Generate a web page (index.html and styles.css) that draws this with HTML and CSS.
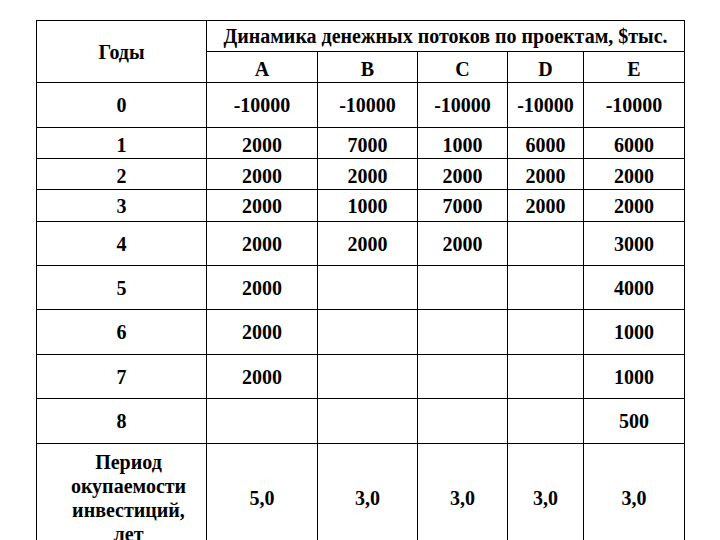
FILE: index.html
```html
<!DOCTYPE html>
<html lang="ru">
<head>
<meta charset="utf-8">
<title>Динамика денежных потоков</title>
<link rel="stylesheet" href="styles.css">
</head>
<body>
<table class="flows">
  <colgroup>
    <col class="c-year">
    <col class="c-a">
    <col class="c-b">
    <col class="c-c">
    <col class="c-d">
    <col class="c-e">
  </colgroup>
  <tr class="h1">
    <td rowspan="2">Годы</td>
    <td colspan="5">Динамика денежных потоков по проектам, $тыс.</td>
  </tr>
  <tr class="h2 lowered">
    <td>A</td><td>B</td><td>C</td><td>D</td><td>E</td>
  </tr>
  <tr class="r45"><td>0</td><td>-10000</td><td>-10000</td><td>-10000</td><td>-10000</td><td>-10000</td></tr>
  <tr class="r31 lowered"><td>1</td><td>2000</td><td>7000</td><td>1000</td><td>6000</td><td>6000</td></tr>
  <tr class="r31 lowered"><td>2</td><td>2000</td><td>2000</td><td>2000</td><td>2000</td><td>2000</td></tr>
  <tr class="r32"><td>3</td><td>2000</td><td>1000</td><td>7000</td><td>2000</td><td>2000</td></tr>
  <tr class="r44"><td>4</td><td>2000</td><td>2000</td><td>2000</td><td></td><td>3000</td></tr>
  <tr class="r44"><td>5</td><td>2000</td><td></td><td></td><td></td><td>4000</td></tr>
  <tr class="r45"><td>6</td><td>2000</td><td></td><td></td><td></td><td>1000</td></tr>
  <tr class="r44"><td>7</td><td>2000</td><td></td><td></td><td></td><td>1000</td></tr>
  <tr class="r45"><td>8</td><td></td><td></td><td></td><td></td><td>500</td></tr>
  <tr class="r108">
    <td class="label">Период<br>окупаемости<br>инвестиций,<br>лет</td>
    <td>5,0</td><td>3,0</td><td>3,0</td><td>3,0</td><td>3,0</td>
  </tr>
</table>
</body>
</html>
```

FILE: styles.css
```css
html, body {
  margin: 0;
  padding: 0;
  background: #ffffff;
}

body {
  font-family: "Liberation Serif", "Times New Roman", serif;
  font-weight: 700;
  font-size: 20px;
  color: #000000;
}

.flows {
  margin: 20px 0 0 36px;
  border-collapse: collapse;
  table-layout: fixed;
  width: 649px;
}

.c-year { width: 170px; }
.c-a { width: 111px; }
.c-b { width: 100px; }
.c-c { width: 90px; }
.c-d { width: 76px; }
.c-e { width: 101px; }

.flows td {
  border: 1px solid #000000;
  padding: 0;
  text-align: center;
  vertical-align: middle;
  line-height: 22px;
  white-space: nowrap;
}

.h1 { height: 31px; }
.h2 { height: 31px; }
.r31 { height: 31px; }
.r32 { height: 32px; }
.r44 { height: 44px; }
.r45 { height: 45px; }
.r108 { height: 108px; }

.lowered td { padding-top: 3px; }

.flows td.label {
  line-height: 24px;
  padding-left: 14px;
}
```
